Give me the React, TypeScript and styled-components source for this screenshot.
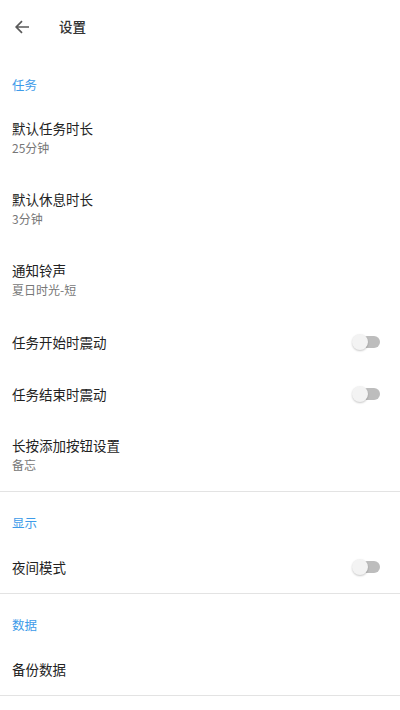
import React, { useState } from "react";
import styled, { createGlobalStyle } from "styled-components";

const GlobalStyle = createGlobalStyle`
  body {
    margin: 0;
    background: #ffffff;
    font-family: "Noto Sans CJK SC", Roboto, sans-serif;
  }
`;

interface IItem {
  title: string;
  sub?: string;
  toggle?: boolean;
}
interface ISection {
  name: string;
  items: IItem[];
}

const sections: ISection[] = [
  {
    name: "任务",
    items: [
      { title: "默认任务时长", sub: "25分钟" },
      { title: "默认休息时长", sub: "3分钟" },
      { title: "通知铃声", sub: "夏日时光-短" },
      { title: "任务开始时震动", toggle: true },
      { title: "任务结束时震动", toggle: true },
      { title: "长按添加按钮设置", sub: "备忘" },
    ],
  },
  {
    name: "显示",
    items: [{ title: "夜间模式", toggle: true }],
  },
  {
    name: "数据",
    items: [{ title: "备份数据" }],
  },
];

const Toggle = () => {
  const [on, setOn] = useState(false);
  return (
    <Switch onClick={() => setOn(!on)}>
      <Track $on={on} />
      <Thumb $on={on} />
    </Switch>
  );
};

const App = () => {
  return (
    <Page>
      <GlobalStyle />
      <AppBar>
        <BackButton>
          <svg width="16" height="16" viewBox="0 0 16 16">
            <path
              d="M15 8H2.5M8 2.2L2.2 8L8 13.8"
              stroke="#5a5a5a"
              strokeWidth="1.7"
              fill="none"
            />
          </svg>
        </BackButton>
        <Title>设置</Title>
      </AppBar>
      {sections.map((section) => (
        <Section key={section.name}>
          <SectionTitle>{section.name}</SectionTitle>
          {section.items.map((item) => (
            <Row key={item.title} $tall={!!item.sub}>
              <RowText>
                <RowTitle>{item.title}</RowTitle>
                {item.sub && <RowSub>{item.sub}</RowSub>}
              </RowText>
              {item.toggle && <Toggle />}
            </Row>
          ))}
        </Section>
      ))}
    </Page>
  );
};

export default App;

const Page = styled.div`
  width: 400px;
  min-height: 710px;
  background: #ffffff;
`;

const AppBar = styled.div`
  height: 54px;
  box-sizing: border-box;
  padding: 0 0 3px 14px;
  display: flex;
  align-items: center;
`;

const BackButton = styled.div`
  width: 16px;
  height: 16px;
  display: flex;
  margin-top: 3px;
  margin-right: 29px;
`;

const Title = styled.div`
  font-size: 13.5px;
  line-height: 20px;
  color: #333333;
  font-weight: 500;
`;

const Section = styled.div`
  border-bottom: 1px solid #e3e3e3;
`;

const SectionTitle = styled.div`
  padding: 21px 12px 8px;
  height: 20px;
  line-height: 20px;
  font-size: 12.5px;
  color: #3d9be9;
`;

const Row = styled.div<{ $tall: boolean }>`
  display: flex;
  align-items: center;
  justify-content: space-between;
  height: ${(p) => (p.$tall ? "71px" : "52px")};
  box-sizing: border-box;
  padding: ${(p) => (p.$tall ? "15px 20px 16px 12px" : "16px 20px 16px 12px")};
`;

const RowText = styled.div`
  display: flex;
  flex-direction: column;
`;

const RowTitle = styled.div`
  font-size: 13.5px;
  line-height: 20px;
  height: 20px;
  color: #222222;
`;

const RowSub = styled.div`
  font-size: 12px;
  line-height: 20px;
  height: 20px;
  color: #777777;
`;

const Switch = styled.div`
  position: relative;
  width: 28px;
  height: 16px;
  cursor: pointer;
`;

const Track = styled.div<{ $on: boolean }>`
  position: absolute;
  left: 2px;
  right: 0;
  top: 2px;
  height: 12px;
  border-radius: 6px;
  background: ${(p) => (p.$on ? "#90caf9" : "#bdbdbd")};
`;

const Thumb = styled.div<{ $on: boolean }>`
  position: absolute;
  top: 0;
  left: ${(p) => (p.$on ? "13px" : "0")};
  width: 16px;
  height: 16px;
  border-radius: 50%;
  background: ${(p) => (p.$on ? "#2196f3" : "#f3f3f3")};
  box-shadow: 0 1px 2px rgba(0, 0, 0, 0.22);
`;
